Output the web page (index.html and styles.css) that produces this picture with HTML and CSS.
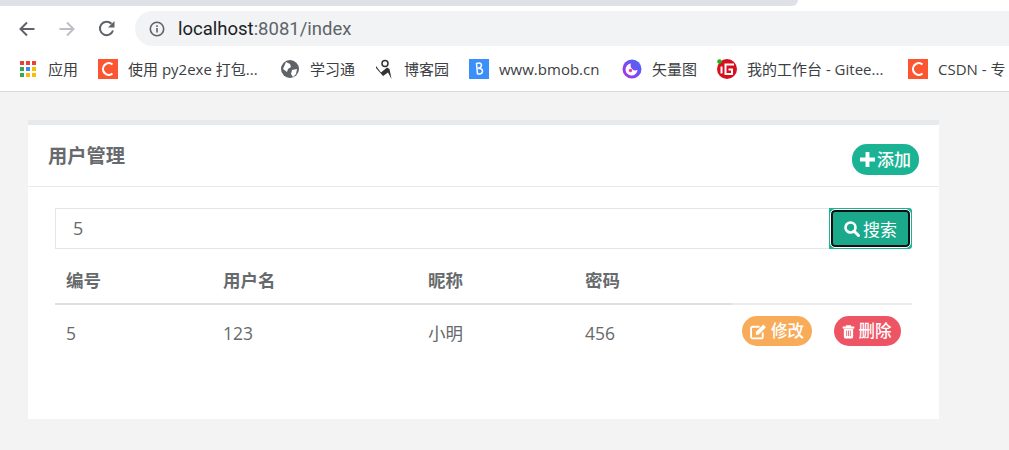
FILE: index.html
```html
<!DOCTYPE html>
<html lang="zh">
<head>
<meta charset="utf-8">
<title>用户管理</title>
<link rel="stylesheet" href="styles.css">
</head>
<body>
<header class="chrome">
  <div class="tabstrip"><div class="tab-tail"></div></div>
  <div class="toolbar">
    <svg class="nav-icon" viewBox="0 0 20 20"><path d="M17.500 10H4M10 3.500L3.500 10l6.500 6.500" fill="none" stroke="#5f6368" stroke-width="2"/></svg>
    <svg class="nav-icon" viewBox="0 0 20 20"><path d="M2.500 10H16M10 3.500l6.500 6.500-6.500 6.500" fill="none" stroke="#bcbfc3" stroke-width="2"/></svg>
    <svg class="nav-icon" viewBox="0 0 20 20"><path d="M16 11.500A6.700 6.700 0 1 1 14.500 4.800" fill="none" stroke="#5f6368" stroke-width="2"/><path d="M17.500 2v6.500H11z" fill="#5f6368"/></svg>
    <div class="omnibox">
      <svg class="info" viewBox="0 0 16 16"><circle cx="8" cy="8" r="6.700" fill="none" stroke="#5f6368" stroke-width="1.600"/><path d="M7.200 7h1.600v4.500H7.200zM7.200 4.300h1.600v1.600H7.200z" fill="#5f6368"/></svg>
      <span class="url"><span class="host">localhost</span>:8081/index</span>
    </div>
  </div>
  <nav class="bookmarks">
    <span class="bm bm-apps"><svg class="fav" viewBox="0 0 16 16"><g>
      <rect x="0" y="0" width="4" height="4" fill="#ea4335"/><rect x="6" y="0" width="4" height="4" fill="#ea4335"/><rect x="12" y="0" width="4" height="4" fill="#ea4335"/>
      <rect x="0" y="6" width="4" height="4" fill="#34a853"/><rect x="6" y="6" width="4" height="4" fill="#4285f4"/><rect x="12" y="6" width="4" height="4" fill="#fbbc05"/>
      <rect x="0" y="12" width="4" height="4" fill="#34a853"/><rect x="6" y="12" width="4" height="4" fill="#fbbc05"/><rect x="12" y="12" width="4" height="4" fill="#fbbc05"/></g></svg><span class="bm-text">应用</span></span>
    <span class="bm bm-py"><svg class="fav fav-l" viewBox="0 0 20 20"><rect width="20" height="20" fill="#fc5531"/><path d="M14.500 5.500A5.800 5.800 0 1 0 14.500 14.500" fill="none" stroke="#fff" stroke-width="2.200"/></svg><span class="bm-text">使用 py2exe 打包...</span></span>
    <span class="bm bm-xxt"><svg class="fav fav-m" viewBox="0 0 18 18"><circle cx="9" cy="9" r="9" fill="#5f6368"/><path d="M5 2l4 2 1 3-3 2-1 3-4-3zM11 10l5-1-1 5-3 3-2-3z" fill="#fff"/></svg><span class="bm-text">学习通</span></span>
    <span class="bm bm-cnb"><svg class="fav fav-c" viewBox="0 0 18 20"><circle cx="10" cy="4.500" r="3" fill="none" stroke="#333" stroke-width="1.500"/><path d="M1 7l5 6.500 6-5 2.500 1.500 2 10-3.500-6.500-5 3.500-7-8z" fill="#333"/></svg><span class="bm-text">博客园</span></span>
    <span class="bm bm-bmob"><svg class="fav fav-l" viewBox="0 0 20 20"><rect width="20" height="20" fill="#3a8ffb"/><path d="M7.500 4.500c3-1 5-.5 5 1.800 0 2-2 2.700-3.500 3 2.500 0 4.500.8 4.500 3 0 2.500-3 3.200-5 2.500z" fill="none" stroke="#fff" stroke-width="1.500"/></svg><span class="bm-text">www.bmob.cn</span></span>
    <span class="bm bm-sl"><svg class="fav fav-l" viewBox="0 0 20 20"><defs><linearGradient id="slg" x1="0" y1="1" x2="1" y2="0"><stop offset="0" stop-color="#b02cf0"/><stop offset="1" stop-color="#3d6ef5"/></linearGradient></defs><circle cx="10" cy="10" r="9.500" fill="url(#slg)"/><path d="M9 4.500a6 6 0 1 0 6.500 6.500 5 5 0 0 1-6.500-6.500z" fill="#fff"/><circle cx="8.500" cy="11.500" r="1.700" fill="#ee3f9f"/></svg><span class="bm-text">矢量图</span></span>
    <span class="bm bm-gitee"><svg class="fav fav-l" viewBox="0 0 20 20"><circle cx="10" cy="10" r="10" fill="#d7101f"/><path d="M4.500 7.500v7M17 5.500H8.500V15H15v-4.500h-3.500" fill="none" stroke="#fff" stroke-width="2"/><circle cx="2.500" cy="2.500" r="2.300" fill="#1db31d"/></svg><span class="bm-text">我的工作台 - Gitee...</span></span>
    <span class="bm"><svg class="fav fav-l" viewBox="0 0 20 20"><rect width="20" height="20" fill="#fc5531"/><path d="M14.500 5.500A5.800 5.800 0 1 0 14.500 14.500" fill="none" stroke="#fff" stroke-width="2.200"/></svg><span class="bm-text">CSDN - 专</span></span>
  </nav>
</header>
<main class="page">
  <section class="card">
    <div class="card-head">
      <h5 class="card-title">用户管理</h5>
      <button class="pill pill-green pill-add"><svg class="ico" viewBox="0 0 14 14"><path d="M5.200 0h3.600v5.200H14v3.600H8.800V14H5.200V8.800H0V5.200h5.200z" fill="#fff"/></svg>添加</button>
    </div>
    <div class="card-body">
      <div class="search">
        <div class="search-input">5</div>
        <div class="search-btn-wrap"><button class="search-btn"><svg class="ico" viewBox="0 0 16 16"><circle cx="6.500" cy="6.500" r="5" fill="none" stroke="#fff" stroke-width="2.600"/><path d="M10 10l4.500 4.500" stroke="#fff" stroke-width="3" stroke-linecap="round"/></svg>搜索</button></div>
      </div>
      <table class="users">
        <thead>
          <tr><th class="c1">编号</th><th class="c2">用户名</th><th class="c3">昵称</th><th class="c4">密码</th><th class="c5"></th></tr>
        </thead>
        <tbody>
          <tr>
            <td>5</td><td>123</td><td>小明</td><td>456</td>
            <td class="actions">
              <button class="pill pill-orange"><svg class="ico ico-edit" viewBox="0 0 16 16"><path d="M12 9v4a1.500 1.500 0 0 1-1.500 1.500h-8A1.500 1.500 0 0 1 1 13V5a1.500 1.500 0 0 1 1.500-1.500H9" fill="none" stroke="#fff" stroke-width="1.800"/><path d="M5.500 8.500L12.500 1.500l2.500 2.500-7 7H5.500z" fill="#fff"/></svg>修改</button>
              <button class="pill pill-red"><svg class="ico ico-trash" viewBox="0 0 14 16"><path d="M1 3h12v1.500H1zM4.500 3V1.500h5V3" fill="#fff" stroke="#fff" stroke-width=".6"/><path d="M2 5h10v9a1.500 1.500 0 0 1-1.500 1.500h-7A1.500 1.500 0 0 1 2 14z" fill="#fff"/><path d="M5 7v6M7 7v6M9 7v6" stroke="#ed5565" stroke-width=".9"/></svg>删除</button>
            </td>
          </tr>
        </tbody>
      </table>
    </div>
  </section>
</main>
</body>
</html>
```
FILE: styles.css
```css
* { box-sizing: border-box; }
html, body { margin: 0; height: 450px; overflow: hidden; }
body {
  background: #f3f3f3;
  font-family: "Open Sans", "Noto Sans CJK SC", sans-serif;
  color: #676a6c;
}
.chrome { background: #fff; height: 92px; border-bottom: 1px solid #d9d9d9; overflow: hidden; }
.tabstrip { height: 6px; background: #fff; }
.tab-tail { width: 798px; height: 6px; background: #dee1e6; border-bottom-right-radius: 8px; }
.toolbar { height: 40px; display: flex; align-items: center; padding: 5px 0 0 17px; }
.nav-icon { width: 20px; height: 20px; margin-right: 20px; flex: none; }
.omnibox {
  flex: 1; height: 35px; margin-left: -2px; background: #f1f3f4;
  border-radius: 18px 0 0 18px;
  display: flex; align-items: center; padding-left: 14px;
}
.info { width: 16px; height: 16px; margin-right: 13px; }
.url { font: 18.500px "Roboto", sans-serif; color: #5f6368; }
.host { color: #202124; }
.bookmarks {
  height: 45px; display: flex; align-items: center; padding-left: 20px;
  white-space: nowrap; font: 15px "Open Sans", "Noto Sans CJK SC", sans-serif; color: #3c4043;
}
.bm { display: inline-flex; align-items: center; flex: none; margin-right: 20px; }
.bm-text { display: block; }
.fav { width: 16px; height: 16px; margin-right: 12px; flex: none; }
.fav-l { width: 20px; height: 20px; margin-right: 10px; }
.fav-m { width: 18px; height: 18px; margin-right: 11px; }
.fav-c { width: 18px; height: 20px; margin-right: 11px; }
.bm-apps .bm-text { width: 30px; }
.bm-py .bm-text { width: 133px; }
.bm-xxt .bm-text, .bm-cnb .bm-text, .bm-sl .bm-text { width: 45px; }
.bm-bmob .bm-text { width: 103px; }
.bm-gitee .bm-text { width: 141px; }

.page { padding: 28px 70px 0 28px; }
.card { background: #fff; border-top: 5px solid #e7eaec; height: 299px; }
.card-head {
  height: 62px; border-bottom: 1px solid #e7eaec;
  display: flex; justify-content: space-between; padding: 0 20px;
}
.card-title { margin: 21px 0 0; font-size: 19.250px; line-height: 20px; font-weight: 700; color: #676a6c; }
.pill {
  border: 0; border-radius: 15px; height: 30px; padding: 0 8px; color: #fff;
  font: 500 16.500px/30px "Open Sans", "Noto Sans CJK SC", sans-serif;
  display: inline-flex; align-items: center; gap: 4px;
}
.pill-add { margin-top: 19px; width: 67px; height: 31px; padding: 0 0 0 8px; gap: 2px; font-size: 17px; }
.pill-green { background: #1ab394; }
.pill-orange { background: #f8ac59; margin-right: 17px; width: 70px; }
.pill-red { background: #ed5565; width: 67px; }
.ico { width: 15px; height: 15px; flex: none; }
.ico-edit { width: 17px; height: 17px; }
.ico-trash { width: 13px; height: 15px; }
.card-body { padding: 21px 27px 0; }
.search { display: flex; height: 41px; }
.search-input {
  flex: 1; border: 1px solid #e5e6e7; border-right: 0; padding-left: 17px;
  font-size: 18px; line-height: 39px; color: #676a6c;
}
.search-btn-wrap {
  width: 83px; height: 41px; background: #1ab394; border-radius: 0 3px 3px 0; padding: 2px;
}
.search-btn {
  width: 79px; height: 37px; background: #1ba98c; color: #fff;
  border: 2px solid #111; outline: 1px solid #fff; outline-offset: 0; border-radius: 4px;
  font: 400 17px "Open Sans", "Noto Sans CJK SC", sans-serif;
  display: flex; align-items: center; justify-content: center; gap: 3px; padding: 0;
}
.search-btn .ico { width: 16px; height: 16px; }
.users { width: 857px; border-collapse: collapse; table-layout: fixed; margin-top: 7px; font-size: 17.500px; }
.users th {
  text-align: left; font-weight: 700; height: 48px; padding: 0 11px;
  border-bottom: 2px solid #dfdfdf; color: #676a6c; font-size: 17.500px;
}
.users th.c5 { border-bottom-color: #e9ebed; }
.c1 { width: 157px; }
.c2 { width: 205px; }
.c3 { width: 157px; }
.c4 { width: 158px; }
.users td { padding: 0 10px; height: 60px; color: #676a6c; line-height: 56px; vertical-align: top; }
.users td:not(.actions) { padding-left: 11px; }
.actions { white-space: nowrap; padding-top: 11px !important; line-height: 30px !important; }
.actions .pill { vertical-align: top; }
```
